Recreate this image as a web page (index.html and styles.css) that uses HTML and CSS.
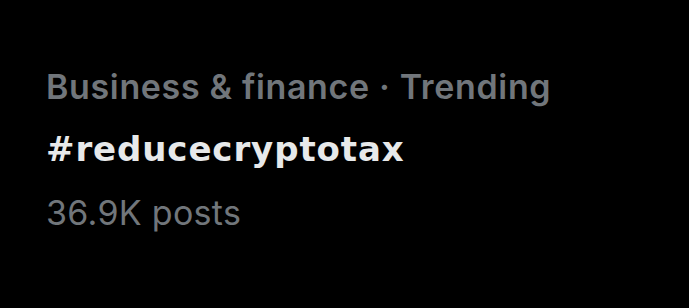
FILE: index.html
```html
<!DOCTYPE html>
<html lang="en">
  <head>
    <meta charset="UTF-8" />
    <meta name="viewport" content="width=device-width, initial-scale=1.0" />
    <title>Trend</title>
    <link rel="stylesheet" href="styles.css">
  </head>
  <body>
    <div class="trend">
      <p class="trend-meta">Business &amp; finance · Trending</p>
      <p class="trend-name">#reducecryptotax</p>
      <p class="trend-count">36.9K posts</p>
    </div>
  </body>
</html>
```
FILE: styles.css
```css
body {
  margin: 0;
  background-color: #000;
  font-family: Inter, "Noto Sans", sans-serif;
  height: 100vh;
}

.trend {
  padding: 56px 0 0 46px;
}

.trend p {
  margin: 0;
  line-height: 62px;
  font-size: 34px;
}

.trend-meta {
  color: #71767b;
  font-weight: 600;
  letter-spacing: 0.65px;
}

.trend-name {
  color: #e7e9ea;
  font-family: "DejaVu Sans", sans-serif;
  font-weight: 700;
  font-size: 33px;
  letter-spacing: 0.9px;
}

.trend .trend-count {
  margin-top: 2px;
  color: #71767b;
  font-weight: 400;
  letter-spacing: 0.3px;
}
```
